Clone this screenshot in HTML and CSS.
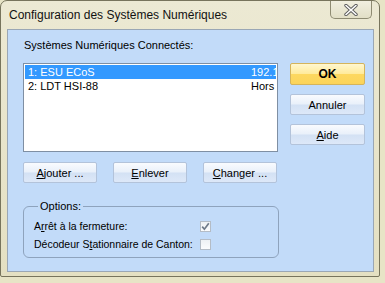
FILE: index.html
```html
<!DOCTYPE html>
<html lang="fr">
<head>
  <meta charset="UTF-8">
  <meta name="viewport" content="width=device-width, initial-scale=1.0">
  <link rel="stylesheet" href="styles.css">
</head>
<body>
  <div class="window">
    <div class="titlebar">
      <span class="title">Configuration des Systèmes Numériques</span>
      <span class="close">
        <svg width="14" height="12" viewBox="0 0 14 12">
          <path d="M2 1.5 L12 10.5 M12 1.5 L2 10.5" stroke="#5b5b5b" stroke-width="3.4" stroke-linecap="round"/>
          <path d="M2 1.5 L12 10.5 M12 1.5 L2 10.5" stroke="#ffffff" stroke-width="1.6" stroke-linecap="round"/>
        </svg>
      </span>
    </div>

    <div class="client">
      <div class="caption">Systèmes Numériques Connectés:</div>

      <div class="main">
        <div class="list-col">
          <div class="listbox">
            <div class="row selected">
              <span class="name">1: ESU ECoS</span>
              <span class="addr">192.168.1.40</span>
            </div>
            <div class="row">
              <span class="name">2: LDT HSI-88</span>
              <span class="addr">Hors ligne</span>
            </div>
          </div>
          <div class="btn-row">
            <button class="btn"><u>A</u>jouter ...</button>
            <button class="btn"><u>E</u>nlever</button>
            <button class="btn"><u>C</u>hanger ...</button>
          </div>
        </div>

        <div class="side">
          <button class="btn btn-ok">OK</button>
          <button class="btn btn-side">Annuler</button>
          <button class="btn btn-side"><u>A</u>ide</button>
        </div>
      </div>

      <fieldset class="options">
        <legend>Options:</legend>
        <div class="opt">
          <span class="opt-label">A<u>r</u>rêt à la fermeture:</span>
          <span class="check">
            <svg width="9" height="9" viewBox="0 0 9 9">
              <path d="M1.2 4.6 L3.4 7.2 L7.8 1.2" stroke="#6f7b8a" stroke-width="1.7" fill="none"/>
            </svg>
          </span>
        </div>
        <div class="opt">
          <span class="opt-label">Décodeur S<u>t</u>ationnaire de Canton:</span>
          <span class="check"></span>
        </div>
      </fieldset>
    </div>
  </div>
</body>
</html>
```

FILE: styles.css
```css
body {
  margin: 0;
  width: 385px;
  height: 283px;
  overflow: hidden;
  background-color: #e7e4c6;
  font-family: 'Liberation Sans', Arial, sans-serif;
  font-size: 11px;
  color: #000;
}

.window {
  box-sizing: border-box;
  width: 380px;
  height: 277px;
  border: 1px solid #77745c;
  border-radius: 7px 7px 2px 2px;
  background: linear-gradient(#ece9d3, #e4e0c2);
  padding: 0 5px 4px 6px;
  display: flex;
  flex-direction: column;
}

.titlebar {
  height: 28px;
  display: flex;
  justify-content: space-between;
  align-items: flex-start;
}

.title {
  font-size: 12px;
  margin: 7px 0 0 2px;
  color: #111;
}

.close {
  width: 42px;
  height: 18px;
  margin-right: 2px;
  box-sizing: border-box;
  border: 1px solid #8e8b72;
  border-top: none;
  border-radius: 0 0 5px 5px;
  background: linear-gradient(#f1efe0, #e2dfc6);
  display: flex;
  align-items: center;
  justify-content: center;
}

.client {
  flex: 1;
  box-sizing: border-box;
  border: 1px solid #9aa7b5;
  background-color: #c2dbf9;
  padding: 9px 0 0 15px;
  display: flex;
  flex-direction: column;
}

.caption {
  line-height: 13px;
  margin-left: 1px;
}

.main {
  display: flex;
  gap: 12px;
  margin-top: 11px;
}

.listbox {
  box-sizing: border-box;
  width: 255px;
  height: 89px;
  background: #fff;
  border: 1px solid #7f8fa3;
  padding-top: 1px;
}

.row {
  display: flex;
  justify-content: space-between;
  height: 14px;
  line-height: 14px;
  padding-left: 3px;
  margin: 0 1px;
}

.row.selected {
  background-color: #3399ff;
  color: #fff;
}

.addr {
  width: 25px;
  overflow: hidden;
  white-space: nowrap;
}

.btn {
  box-sizing: border-box;
  width: 74px;
  height: 21px;
  font-family: 'Liberation Sans', Arial, sans-serif;
  font-size: 11px;
  color: #000;
  padding: 0;
  border: 1px solid #b3c3da;
  border-radius: 2px;
  background: linear-gradient(#f9fbfe 0%, #e9f0fa 48%, #d3e1f4 52%, #dde8f8 100%);
}

.btn-row {
  display: flex;
  gap: 16px;
  margin-top: 10px;
}

.side {
  display: flex;
  flex-direction: column;
  gap: 9px;
}

.side .btn {
  width: 75px;
}

.btn-ok {
  height: 22px;
  font-weight: bold;
  font-size: 12px;
  border-color: #d4b45c;
  background: linear-gradient(#fff7cf 0%, #ffeb9c 48%, #fdd860 52%, #fbd45a 100%);
}

.options {
  box-sizing: border-box;
  width: 256px;
  margin: 17px 0 0 0;
  padding: 4px 0 4px 10px;
  border: 1px solid #8ea3bd;
  border-radius: 6px;
}

.options legend {
  padding: 0 2px;
  margin-left: 4px;
  line-height: 13px;
}

.opt {
  display: flex;
  align-items: center;
  height: 18px;
}

.opt-label {
  width: 166px;
  font-size: 10.5px;
  white-space: nowrap;
}

.check {
  box-sizing: border-box;
  width: 11px;
  height: 11px;
  border: 1px solid #b4bcc6;
  background: linear-gradient(#eef1f4, #fbfcfd);
  display: flex;
  align-items: center;
  justify-content: center;
}
```
